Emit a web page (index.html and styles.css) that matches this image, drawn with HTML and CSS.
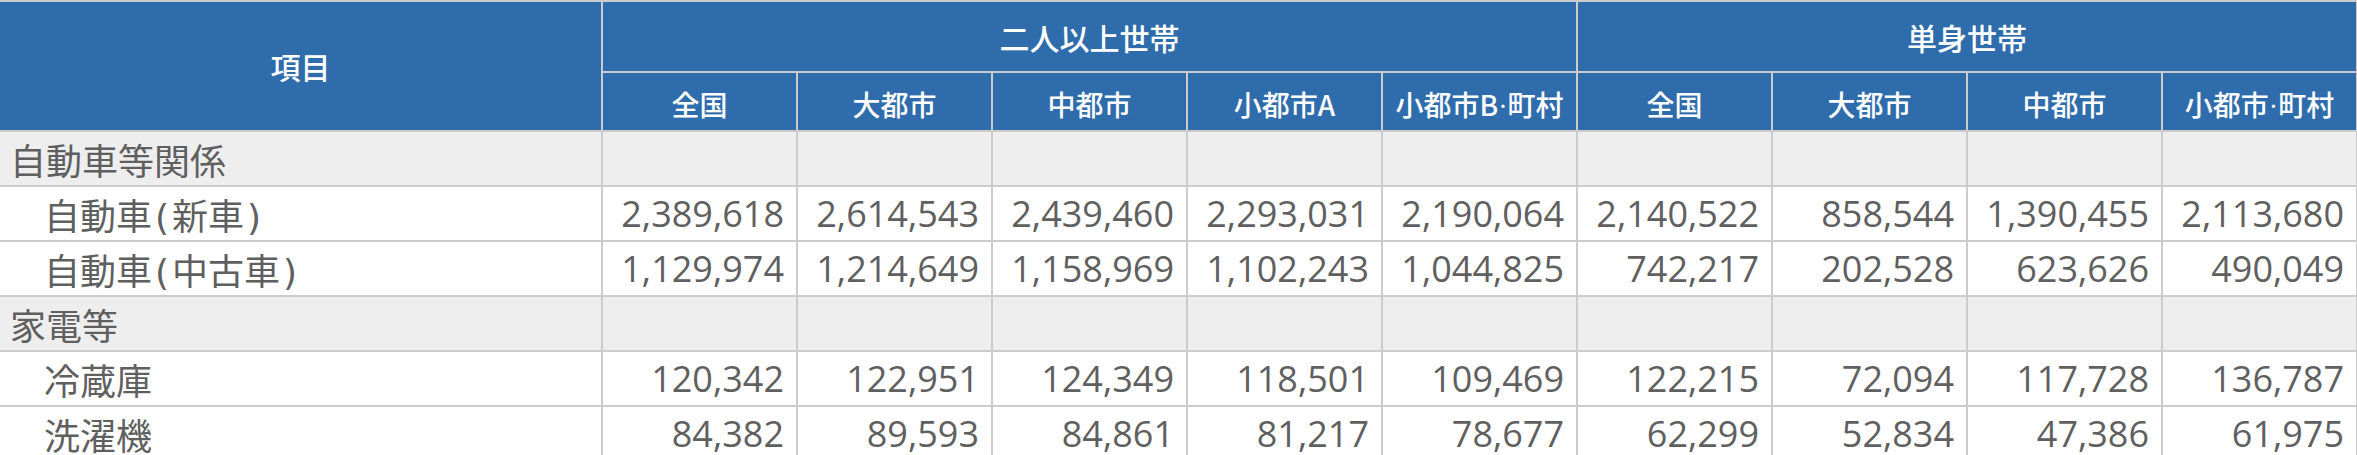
FILE: index.html
```html
<!DOCTYPE html>
<html lang="ja">
<head>
<meta charset="utf-8">
<title>耐久消費財</title>
<link rel="stylesheet" href="styles.css">
</head>
<body>
<table class="data-table">
  <colgroup>
    <col class="col-item">
    <col class="col-num"><col class="col-num"><col class="col-num"><col class="col-num"><col class="col-num">
    <col class="col-num"><col class="col-num"><col class="col-num"><col class="col-num">
  </colgroup>
  <thead>
    <tr class="head-top">
      <th rowspan="2" class="head-item">項目</th>
      <th colspan="5">二人以上世帯</th>
      <th colspan="4">単身世帯</th>
    </tr>
    <tr class="head-sub">
      <th>全国</th>
      <th>大都市</th>
      <th>中都市</th>
      <th>小都市A</th>
      <th>小都市B<span class="dot">·</span>町村</th>
      <th>全国</th>
      <th>大都市</th>
      <th>中都市</th>
      <th>小都市<span class="dot">·</span>町村</th>
    </tr>
  </thead>
  <tbody>
    <tr class="cat">
      <td class="label">自動車等関係</td>
      <td></td><td></td><td></td><td></td><td></td><td></td><td></td><td></td><td></td>
    </tr>
    <tr>
      <td class="label sub">自動車<span class="paren">(</span>新車<span class="paren">)</span></td>
      <td>2,389,618</td><td>2,614,543</td><td>2,439,460</td><td>2,293,031</td><td>2,190,064</td>
      <td>2,140,522</td><td>858,544</td><td>1,390,455</td><td>2,113,680</td>
    </tr>
    <tr>
      <td class="label sub">自動車<span class="paren">(</span>中古車<span class="paren">)</span></td>
      <td>1,129,974</td><td>1,214,649</td><td>1,158,969</td><td>1,102,243</td><td>1,044,825</td>
      <td>742,217</td><td>202,528</td><td>623,626</td><td>490,049</td>
    </tr>
    <tr class="cat">
      <td class="label">家電等</td>
      <td></td><td></td><td></td><td></td><td></td><td></td><td></td><td></td><td></td>
    </tr>
    <tr>
      <td class="label sub">冷蔵庫</td>
      <td>120,342</td><td>122,951</td><td>124,349</td><td>118,501</td><td>109,469</td>
      <td>122,215</td><td>72,094</td><td>117,728</td><td>136,787</td>
    </tr>
    <tr>
      <td class="label sub">洗濯機</td>
      <td>84,382</td><td>89,593</td><td>84,861</td><td>81,217</td><td>78,677</td>
      <td>62,299</td><td>52,834</td><td>47,386</td><td>61,975</td>
    </tr>
  </tbody>
</table>
</body>
</html>
```

FILE: styles.css
```css
html, body {
  margin: 0;
  padding: 0;
  background: #ffffff;
}

body {
  font-family: "Open Sans", "Noto Sans CJK JP", sans-serif;
  color: #5f5f5f;
}

.data-table {
  width: 2357px;
  table-layout: fixed;
  border-collapse: collapse;
  border-top: 2px solid #cccccc;
}

.col-item { width: 602px; }
.col-num { width: 195px; }

.data-table th,
.data-table td {
  border: 2px solid #cccccc;
  padding: 0;
}

.data-table tr > :first-child {
  border-left: none;
}

.data-table th {
  background: #2f6cac;
  color: #ffffff;
  font-family: "Noto Sans CJK JP", sans-serif;
  font-weight: 500;
  font-size: 30px;
  text-align: center;
  vertical-align: middle;
}

.head-top th {
  height: 69px;
}

.head-sub th {
  height: 53px;
  font-size: 28px;
  padding-top: 4px;
  white-space: nowrap;
}

.dot {
  font-family: "Open Sans", sans-serif;
  margin: 0 1px;
}

.data-table td {
  height: 53px;
  font-size: 36px;
  text-align: right;
  padding-right: 12px;
  vertical-align: middle;
  white-space: nowrap;
}

.data-table td.label {
  text-align: left;
  padding-left: 10px;
  font-family: "Noto Sans CJK JP", sans-serif;
}

.data-table td.label.sub {
  padding-left: 44px;
}

.paren {
  font-family: "DejaVu Sans", sans-serif;
  margin: 0 3px;
}

.cat td {
  background: #eeeeee;
}
```
